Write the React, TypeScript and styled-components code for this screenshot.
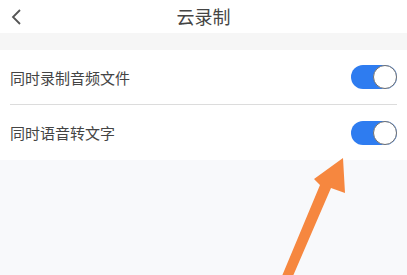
import { createGlobalStyle } from "styled-components";
import styled from "styled-components";

const GlobalStyle = createGlobalStyle`
  html, body {
    margin: 0;
    padding: 0;
    background: #f8f9fb;
    font-family: "Noto Sans CJK SC", "Noto Sans", sans-serif;
  }
`;

const Page = styled.div`
  position: relative;
  width: 407px;
  height: 275px;
  overflow: hidden;
  background: #f8f9fb;
`;

const Header = styled.header`
  height: 33px;
  display: grid;
  grid-template-columns: 40px 1fr 40px;
  align-items: center;
  background: #fff;
`;

const Back = styled.button`
  border: 0;
  background: none;
  padding: 0 0 0 11px;
  display: flex;
  align-items: center;
  height: 33px;
`;

const Title = styled.h1`
  margin: 0;
  text-align: center;
  font-size: 18px;
  font-weight: 400;
  color: #444;
  line-height: 33px;
`;

const Spacer = styled.div`
  height: 17px;
  background: #f6f6f6;
`;

const Section = styled.section`
  background: #fff;
  padding: 0 10px 0 10px;
`;

const Row = styled.div<{ $divider?: boolean; $h: number }>`
  height: ${(p) => p.$h}px;
  display: flex;
  align-items: center;
  justify-content: space-between;
  border-bottom: ${(p) => (p.$divider ? "1px solid #dcdcdc" : "none")};
`;

const Label = styled.span`
  font-size: 15px;
  color: #444;
`;

const Track = styled.div<{ $on: boolean }>`
  width: 46px;
  height: 24px;
  border-radius: 12px;
  background: ${(p) => (p.$on ? "#2e7cf0" : "#e5e5e5")};
  display: flex;
  align-items: center;
  justify-content: ${(p) => (p.$on ? "flex-end" : "flex-start")};
  box-sizing: border-box;
`;

const Knob = styled.div`
  width: 24px;
  height: 24px;
  border-radius: 50%;
  background: #fff;
  border: 1.5px solid #707070;
  box-sizing: border-box;
`;

const ArrowLayer = styled.svg`
  position: absolute;
  left: 0;
  top: 0;
  pointer-events: none;
`;

const Toggle = ({ on }: { on: boolean }) => (
  <Track $on={on}>
    <Knob />
  </Track>
);

export default function App() {
  return (
    <Page>
      <GlobalStyle />
      <Header>
        <Back>
          <svg width="11" height="16" viewBox="0 0 11 16">
            <path d="M9 1 L2 8 L9 15" fill="none" stroke="#555" strokeWidth="1.8" />
          </svg>
        </Back>
        <Title>云录制</Title>
        <div />
      </Header>
      <Spacer />
      <Section>
        <Row $divider $h={54}>
          <Label>同时录制音频文件</Label>
          <Toggle on />
        </Row>
        <Row $h={55}>
          <Label>同时语音转文字</Label>
          <Toggle on />
        </Row>
      </Section>
      <ArrowLayer width="407" height="275" viewBox="0 0 407 275">
        <polygon
          points="282,276 320,185 314,179 343,158 345,193 331,188 293,276"
          fill="#f6873f"
        />
      </ArrowLayer>
    </Page>
  );
}
